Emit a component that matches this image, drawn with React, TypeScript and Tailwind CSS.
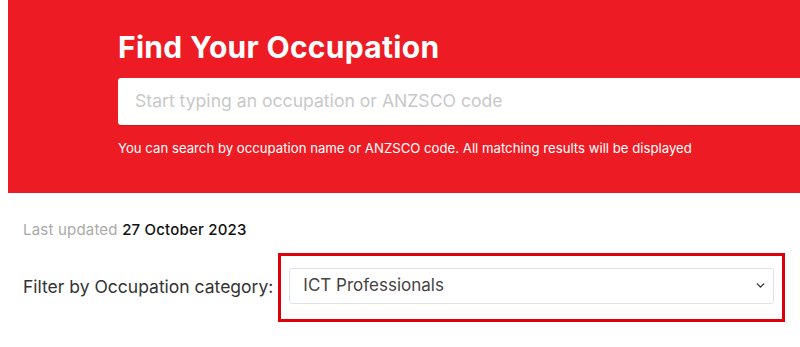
import { ChevronDown } from "lucide-react";

function App() {
  return (
    <div className="h-[347px] w-[800px] overflow-hidden bg-white font-['Inter',sans-serif]">
      <div className="ml-2 h-[193px] bg-[#ed1c24] pl-[110px] pt-[30px]">
        <h1 className="text-[30px] font-bold leading-[34px] tracking-[0.3px] text-white">
          Find Your Occupation
        </h1>
        <div className="mt-[14px] flex h-[47px] items-center rounded-l-[3px] bg-white pl-[17px] shadow-[0_1px_1px_rgba(0,0,0,0.15)]">
          <span className="text-[17.6px] text-[#c8c8c8]">
            Start typing an occupation or ANZSCO code
          </span>
        </div>
        <p className="mt-[14px] text-[13.2px] text-white">
          You can search by occupation name or ANZSCO code. All matching results will be displayed
        </p>
      </div>

      <div className="pl-[23px] pt-[26px]">
        <p className="text-[15px] tracking-[0.2px] text-[#aaaaaa]">
          Last updated <span className="font-medium text-[#111]">27 October 2023</span>
        </p>

        <div className="mt-[11px] flex items-center">
          <span className="text-[17.5px] text-[#333]">
            Filter by Occupation category:
          </span>
          <div className="ml-[5px] border-[3px] border-[#e0000b] pb-[15px] pl-[8px] pr-[8px] pt-[12px]">
            <div className="flex h-[36px] w-[485px] items-center justify-between rounded-[3px] border border-[#dde2ea] pl-[13px] pr-[6px]">
              <span className="text-[17px] text-[#444]">ICT Professionals</span>
              <ChevronDown className="h-[13px] w-[13px] text-[#333]" strokeWidth={2.5} />
            </div>
          </div>
        </div>
      </div>
    </div>
  );
}

export default App;
